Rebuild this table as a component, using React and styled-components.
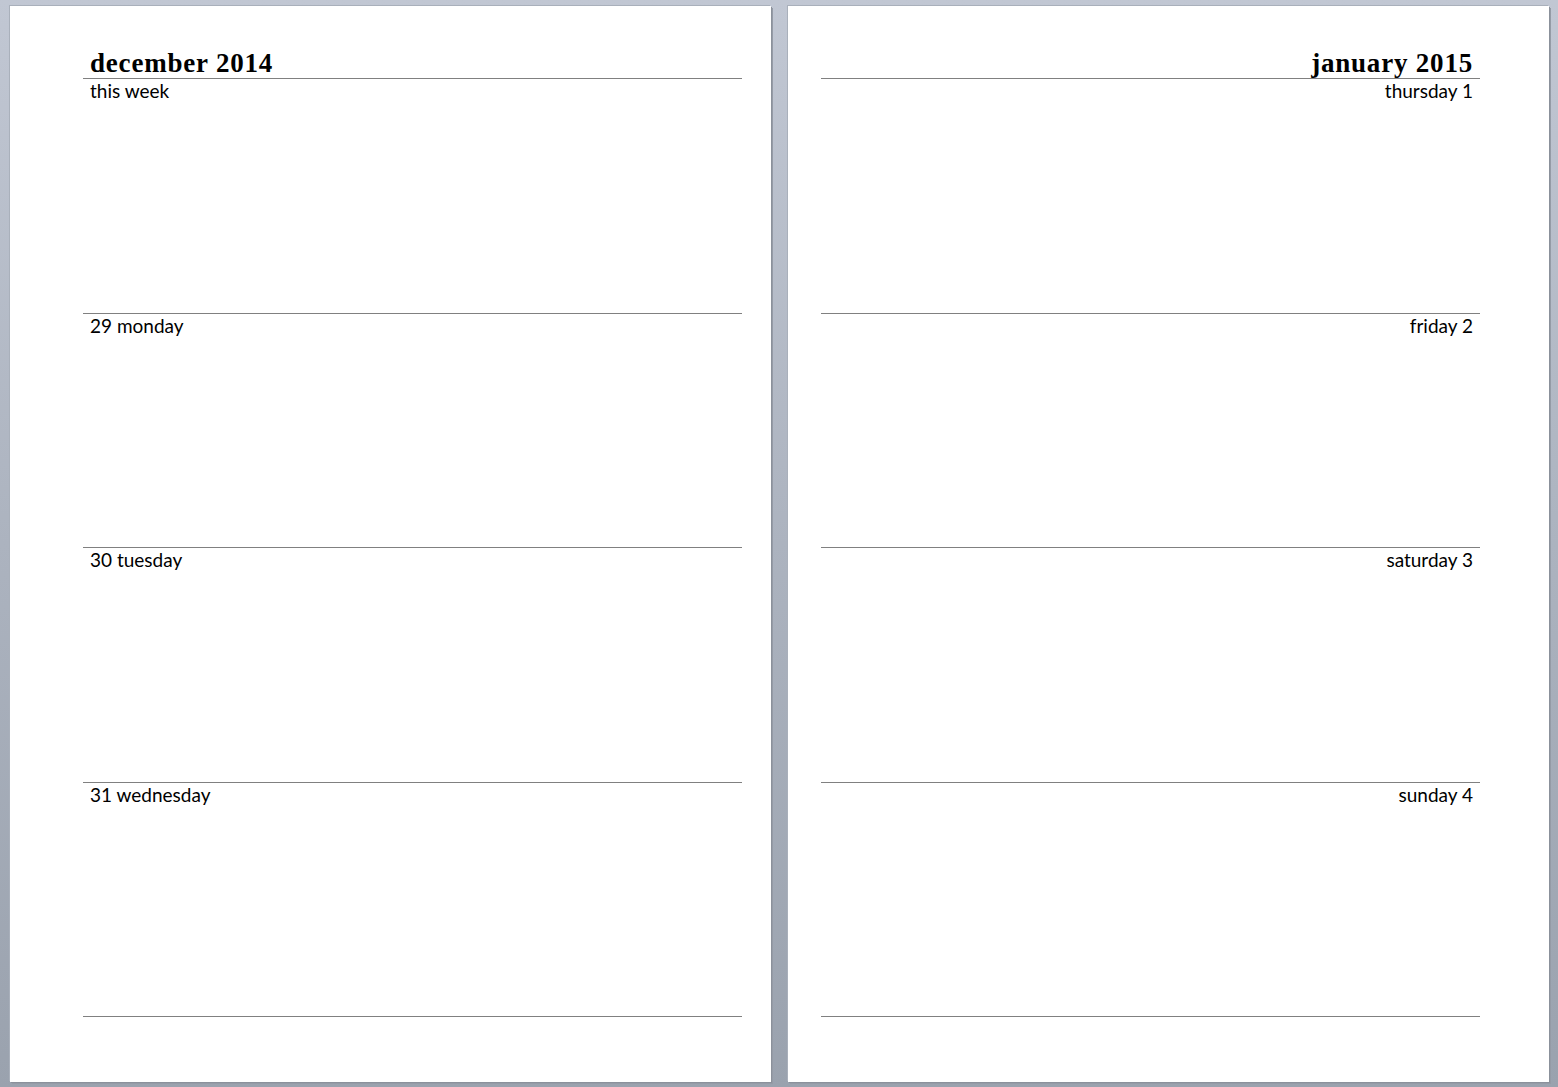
import { Fragment } from "react";
import styled, { createGlobalStyle } from "styled-components";

const leftDays = ["this week", "29 monday", "30 tuesday", "31 wednesday"];
const rightDays = ["thursday 1", "friday 2", "saturday 3", "sunday 4"];

function Page({ side, month, days }) {
  return (
    <Sheet side={side}>
      <Title side={side}>{month}</Title>
      <Slots>
        {days.map((d) => (
          <Slot key={d}>
            <DayLabel side={side}>{d}</DayLabel>
          </Slot>
        ))}
      </Slots>
    </Sheet>
  );
}

function App() {
  return (
    <Fragment>
      <GlobalStyle />
      <Desk>
        <Page side="left" month="december 2014" days={leftDays} />
        <Page side="right" month="january 2015" days={rightDays} />
      </Desk>
    </Fragment>
  );
}

const GlobalStyle = createGlobalStyle`
  html, body {
    margin: 0;
    padding: 0;
  }
  body {
    font-family: "Lato", "Liberation Sans", sans-serif;
    overflow: hidden;
  }
`;

const Desk = styled.div`
  width: 1558px;
  height: 1087px;
  box-sizing: border-box;
  padding: 6px 9px 0 10px;
  display: flex;
  gap: 17px;
  background: linear-gradient(#c1c7d3, #acb3bf 50%, #9aa2ae);
`;

const Sheet = styled.div`
  width: 761px;
  height: 1076px;
  background: #fff;
  box-sizing: border-box;
  padding: 44px ${(p) => (p.side === "left" ? "29px 0 73px" : "69px 0 33px")};
  box-shadow: 1px 1px 0 #8b919b, 2px 2px 0 #959ba6, -1px -1px 0 #a9b0bb;
`;

const Title = styled.h1`
  margin: 0;
  height: 28px;
  padding: 0 7px;
  font-family: "Liberation Serif", serif;
  font-weight: bold;
  font-size: 27px;
  line-height: 26px;
  letter-spacing: 0.8px;
  color: #000;
  text-align: ${(p) => p.side};
`;

const Slots = styled.div`
  display: flex;
  flex-direction: column;
  border-bottom: 1px solid #808080;
`;

const Slot = styled.div`
  height: 234.5px;
  box-sizing: border-box;
  border-top: 1px solid #808080;
`;

const DayLabel = styled.div`
  padding: 1px 7px 0;
  font-size: 19px;
  line-height: 22px;
  color: #000;
  text-align: ${(p) => p.side};
`;

export default App;
